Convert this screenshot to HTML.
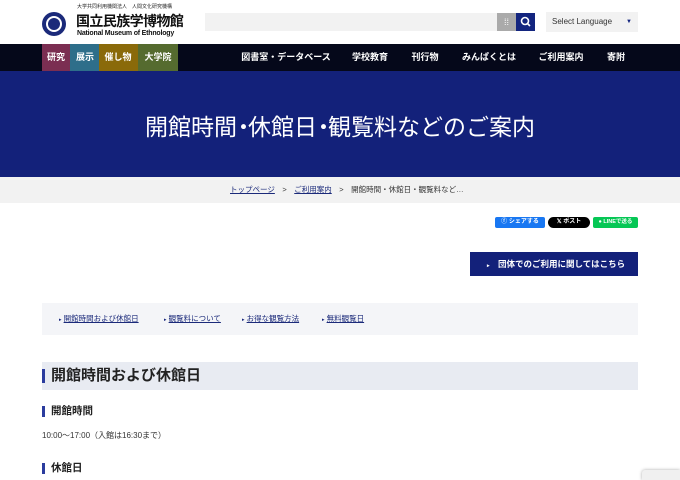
<!DOCTYPE html>
<html><head><meta charset="utf-8"><style>
*{margin:0;padding:0;box-sizing:border-box}
body{width:680px;height:480px;overflow:hidden;background:#fff;font-family:"Liberation Sans","Noto Sans CJK JP",sans-serif;color:#333;position:relative}
.a{position:absolute;line-height:1}
a{color:#1b2a7a;text-decoration:underline}
</style></head><body>
<div class="a" style="left:42px;top:12px;width:24px;height:24px;border-radius:50%;background:#1b2a7a"></div>
<div class="a" style="left:46px;top:16px;width:16px;height:16px;border-radius:50%;background:#fff"></div>
<div class="a" style="left:48px;top:18px;width:12px;height:12px;border-radius:50%;background:#1b2a7a"></div>
<div class="a" style="left:77px;top:5px;font-size:5px;color:#222;white-space:nowrap">大学共同利用機関法人　人間文化研究機構</div>
<div class="a" style="left:76px;top:14px;font-size:14px;font-weight:bold;color:#111;letter-spacing:-0.6px;white-space:nowrap">国立民族学博物館</div>
<div class="a" style="left:77px;top:30px;font-size:7px;font-weight:bold;color:#111;white-space:nowrap;letter-spacing:-0.2px">National Museum of Ethnology</div>
<div class="a" style="left:205px;top:13px;width:292px;height:18px;background:#f2f2f2"></div>
<div class="a" style="left:497px;top:13px;width:19px;height:18px;background:#aaa;color:#fff;font-size:9px;text-align:center;line-height:18px">⁞⁞</div>
<div class="a" style="left:516px;top:13px;width:19px;height:18px;background:#13257f">
<svg width="19" height="18"><circle cx="9" cy="8" r="3.5" stroke="#fff" stroke-width="1.6" fill="none"/><line x1="11.5" y1="10.5" x2="14" y2="13" stroke="#fff" stroke-width="1.6"/></svg></div>
<div class="a" style="left:546px;top:12px;width:92px;height:20px;background:#f2f2f2;font-size:8px;color:#333;line-height:20px;padding-left:6px">Select Language<span style="position:absolute;right:6px;font-size:6px;color:#13257f">▼</span></div>
<div class="a" style="left:0;top:44px;width:680px;height:27px;background:#05081a"></div>
<div class="a" style="left:42px;top:44px;width:28px;height:27px;background:#7b2e52"></div>
<div class="a" style="left:70px;top:44px;width:29px;height:27px;background:#2e6e8a"></div>
<div class="a" style="left:99px;top:44px;width:39px;height:27px;background:#8a6a0a"></div>
<div class="a" style="left:138px;top:44px;width:40px;height:27px;background:#556b2f"></div>
<div class="a" style="left:0;top:44px;width:680px;height:27px;font-size:9px;font-weight:bold;color:#fff;line-height:27px">
<span class="a" style="left:56px;top:9px;transform:translateX(-50%);white-space:nowrap">研究</span>
<span class="a" style="left:85px;top:9px;transform:translateX(-50%);white-space:nowrap">展示</span>
<span class="a" style="left:118px;top:9px;transform:translateX(-50%);white-space:nowrap">催し物</span>
<span class="a" style="left:158px;top:9px;transform:translateX(-50%);white-space:nowrap">大学院</span>
<span class="a" style="left:286px;top:9px;transform:translateX(-50%);white-space:nowrap">図書室・データベース</span>
<span class="a" style="left:370px;top:9px;transform:translateX(-50%);white-space:nowrap">学校教育</span>
<span class="a" style="left:425px;top:9px;transform:translateX(-50%);white-space:nowrap">刊行物</span>
<span class="a" style="left:489px;top:9px;transform:translateX(-50%);white-space:nowrap">みんぱくとは</span>
<span class="a" style="left:561px;top:9px;transform:translateX(-50%);white-space:nowrap">ご利用案内</span>
<span class="a" style="left:616px;top:9px;transform:translateX(-50%);white-space:nowrap">寄附</span>
</div>
<div class="a" style="left:0;top:71px;width:680px;height:106px;background:#13217a"></div>
<div class="a" style="left:0;top:116px;width:680px;color:#fff;font-size:23px;text-align:center;white-space:nowrap">開館時間<span style="letter-spacing:-7px;margin-left:-5px">・</span>休館日<span style="letter-spacing:-7px;margin-left:-5px">・</span>観覧料などのご案内</div>
<div class="a" style="left:0;top:177px;width:680px;height:26px;background:#f2f2f2"></div>
<div class="a" style="left:230px;top:186px;font-size:7.5px;white-space:nowrap"><a>トップページ</a>　&gt;　<a>ご利用案内</a>　&gt;　<span style="color:#333">開館時間・休館日・観覧料など…</span></div>
<div class="a" style="left:495px;top:217px;width:50px;height:11px;background:#1877f2;border-radius:2px;color:#fff;font-size:6px;line-height:11px;text-align:center;font-weight:bold">ⓕ シェアする</div>
<div class="a" style="left:548px;top:217px;width:42px;height:11px;background:#000;border-radius:6px;color:#fff;font-size:6px;line-height:11px;text-align:center;font-weight:bold">𝕏 ポスト</div>
<div class="a" style="left:593px;top:217px;width:45px;height:11px;background:#06c755;border-radius:2px;color:#fff;font-size:5.5px;line-height:11px;text-align:center;font-weight:bold">● LINEで送る</div>
<div class="a" style="left:470px;top:252px;width:168px;height:24px;background:#13217a;color:#fff;font-size:8.5px;font-weight:bold;line-height:24px;padding-left:17px;white-space:nowrap"><span style="font-size:5px">▸</span>　団体でのご利用に関してはこちら</div>
<div class="a" style="left:42px;top:303px;width:596px;height:32px;background:#f4f5f8"></div>
<div class="a" style="left:0;top:315px;width:680px;font-size:7.5px;white-space:nowrap">
<span class="a" style="left:59px"><span style="color:#13217a;font-size:5px">▸</span> <a>開館時間および休館日</a></span>
<span class="a" style="left:164px"><span style="color:#13217a;font-size:5px">▸</span> <a>観覧料について</a></span>
<span class="a" style="left:242px"><span style="color:#13217a;font-size:5px">▸</span> <a>お得な観覧方法</a></span>
<span class="a" style="left:322px"><span style="color:#13217a;font-size:5px">▸</span> <a>無料観覧日</a></span>
</div>
<div class="a" style="left:42px;top:362px;width:596px;height:28px;background:#e8ebf2"></div>
<div class="a" style="left:42px;top:369px;width:3px;height:14px;background:#2b3c9e"></div>
<div class="a" style="left:51px;top:368px;font-size:15px;font-weight:bold;color:#222;white-space:nowrap">開館時間および休館日</div>
<div class="a" style="left:42px;top:406px;width:3px;height:11px;background:#2b3c9e"></div>
<div class="a" style="left:51px;top:406px;font-size:10.5px;font-weight:bold;color:#222">開館時間</div>
<div class="a" style="left:42px;top:432px;font-size:8px;color:#333;white-space:nowrap">10:00～17:00（入館は16:30まで）</div>
<div class="a" style="left:42px;top:463px;width:3px;height:11px;background:#2b3c9e"></div>
<div class="a" style="left:51px;top:463px;font-size:10.5px;font-weight:bold;color:#222">休館日</div>
<div class="a" style="left:642px;top:470px;width:38px;height:10px;background:#f0f0f0;border-radius:3px 0 0 0;box-shadow:0 0 3px #aaa"></div>
</body></html>
